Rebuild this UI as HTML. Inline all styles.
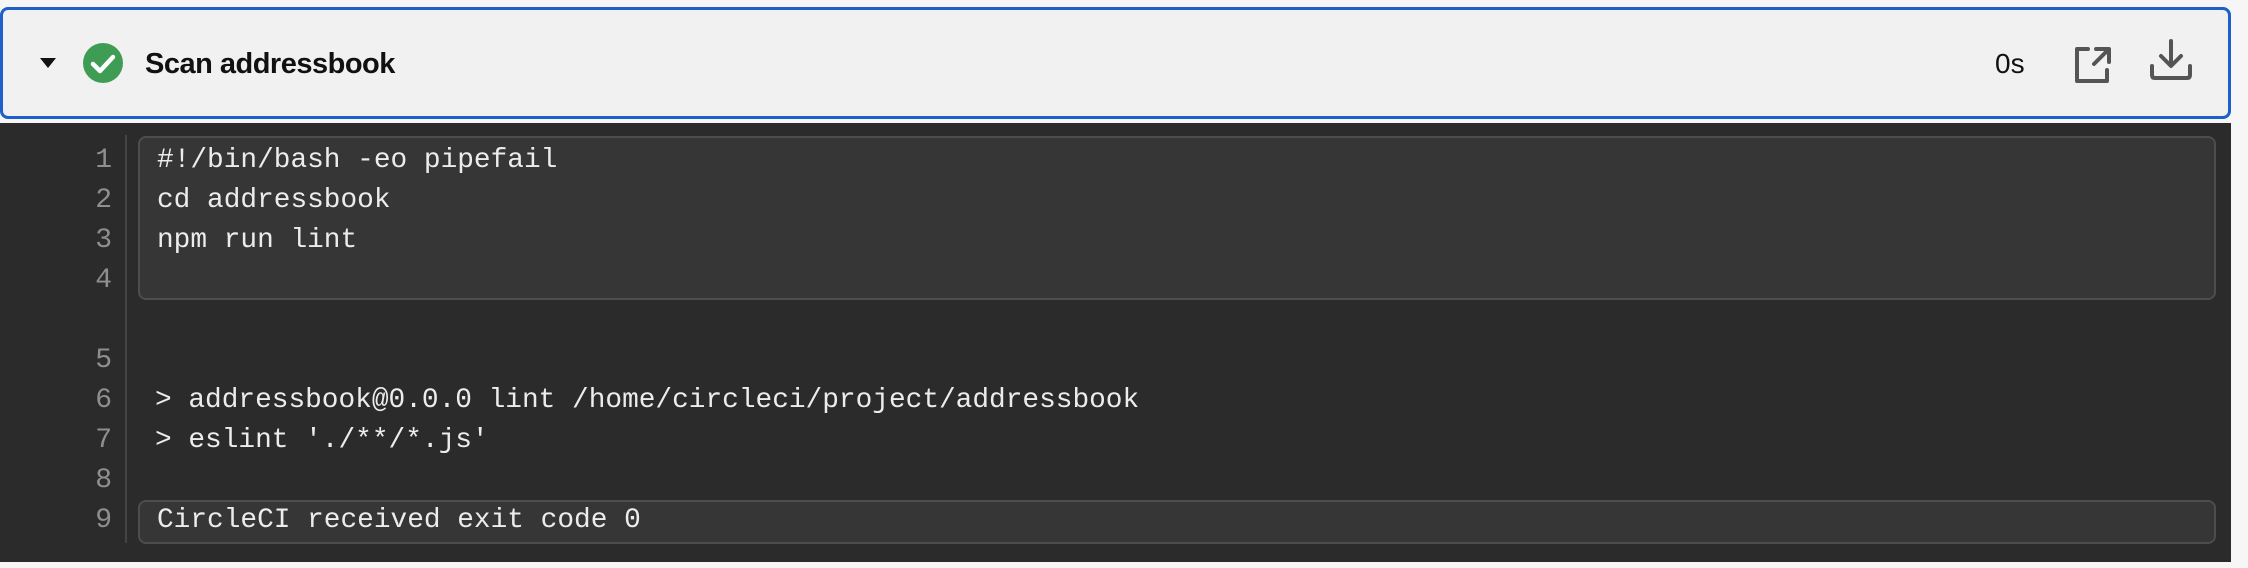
<!DOCTYPE html>
<html><head><meta charset="utf-8"><style>
body{margin:0;width:2248px;height:568px;background:#f6f6f6;position:relative;overflow:hidden;font-family:"Liberation Sans",sans-serif}
.hdr{position:absolute;left:0;top:7px;width:2225px;height:106px;border:3px solid #1f5fc8;border-radius:8px;background:#f1f1f1}
.dark{position:absolute;left:0;top:123px;width:2231px;height:439px;background:#2b2b2b}
.title{position:absolute;left:145px;top:48px;font-size:29px;font-weight:bold;color:#111;letter-spacing:-0.5px}
.dur{position:absolute;left:1995px;top:48px;font-size:28px;color:#111}
.ln{position:absolute;left:60px;width:52px;text-align:right;font-family:"Liberation Mono",monospace;font-size:28px;color:#8f8f8f;line-height:40px}
.gut{position:absolute;left:125px;top:135px;width:2px;height:408px;background:#444}
.box{position:absolute;left:138px;width:2074px;background:#363636;border:2px solid #4d4d4d;border-radius:8px}
.code{position:absolute;left:157px;font-family:"Liberation Mono",monospace;font-size:27.8px;color:#ececec;line-height:40px;white-space:pre}
</style></head><body>
<div class="hdr"></div>
<svg style="position:absolute;left:38px;top:56px" width="20" height="14"><polygon points="2,2 18,2 10,12" fill="#111"/></svg>
<svg style="position:absolute;left:83px;top:43px" width="40" height="40"><circle cx="20" cy="20" r="20" fill="#3f9c55"/><path d="M10 21 L17 28 L30 14" stroke="#fff" stroke-width="4.5" fill="none" stroke-linecap="round" stroke-linejoin="round"/></svg>
<div class="title">Scan addressbook</div>
<div class="dur">0s</div>
<svg style="position:absolute;left:2074px;top:46px" width="38" height="38" viewBox="0 0 38 38" fill="none" stroke="#555" stroke-width="4" stroke-linecap="round" stroke-linejoin="round"><path d="M14 3 H3 V35 H33 V24"/><path d="M22 3 H35 V16"/><path d="M34 4 L20 18"/></svg>
<svg style="position:absolute;left:2148px;top:38px" width="46" height="44" viewBox="0 0 46 44" fill="none" stroke="#555" stroke-width="4" stroke-linecap="round" stroke-linejoin="round"><path d="M23 3 V27"/><path d="M13 18 L23 28 L33 18"/><path d="M4 28 V37 Q4 40 7 40 H39 Q42 40 42 37 V28"/></svg>
<div class="dark"></div>
<div class="gut"></div>
<div class="box" style="top:136px;height:160px"></div>
<div class="box" style="top:500px;height:40px"></div>
<div class="ln" style="top:141px">1<br>2<br>3<br>4</div>
<div class="ln" style="top:341px">5<br>6<br>7<br>8<br>9</div>
<div class="code" style="top:141px">#!/bin/bash -eo pipefail
cd addressbook
npm run lint</div>
<div class="code" style="top:381px;left:155px">&gt; addressbook@0.0.0 lint /home/circleci/project/addressbook
&gt; eslint './**/*.js'</div>
<div class="code" style="top:501px">CircleCI received exit code 0</div>
</body></html>
